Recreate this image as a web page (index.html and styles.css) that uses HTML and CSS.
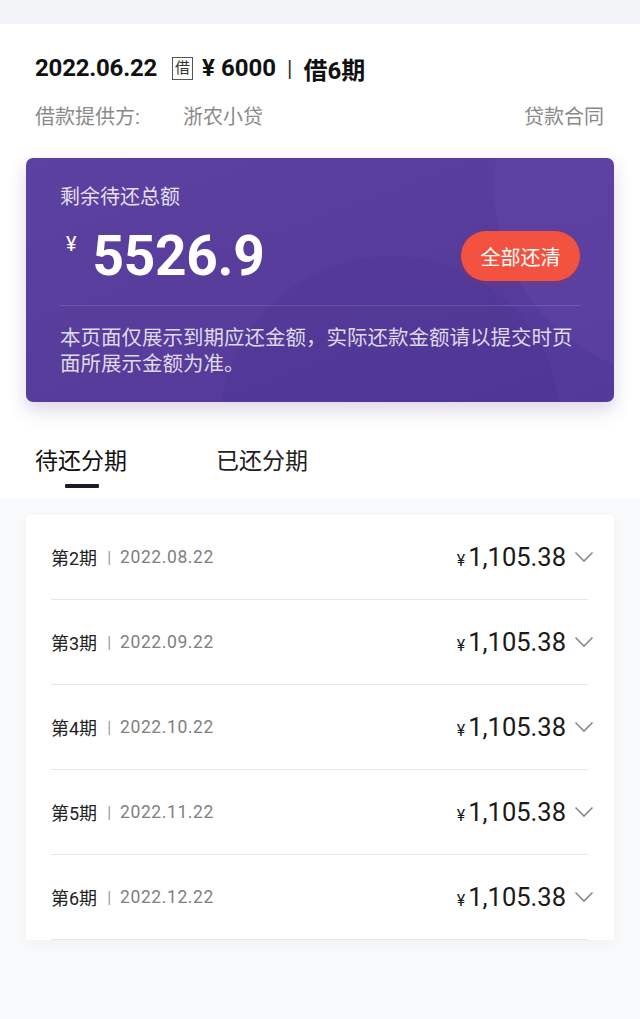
FILE: index.html
```html
<!DOCTYPE html>
<html lang="zh-CN">
<head>
<meta charset="utf-8">
<title>借款详情</title>
<link rel="stylesheet" href="styles.css">
</head>
<body>
<div class="topbar"></div>
<section class="head">
  <div class="title">
    <span class="date">2022.06.22</span>
    <span class="tag">借</span>
    <span class="amt">¥ 6000</span>
    <span class="sep">|</span>
    <span class="term">借6期</span>
  </div>
  <div class="provider">
    <span class="plabel">借款提供方:</span>
    <span class="pname">浙农小贷</span>
    <span class="contract">贷款合同</span>
  </div>
  <div class="card">
    <div class="clabel">剩余待还总额</div>
    <div class="crow">
      <div class="total"><span class="yen">¥</span><span class="num">5526.9</span></div>
      <button class="payall">全部还清</button>
    </div>
    <div class="cdiv"></div>
    <p class="note">本页面仅展示到期应还金额，实际还款金额请以提交时页面所展示金额为准。</p>
  </div>
  <div class="tabs">
    <div class="tab active">待还分期</div>
    <div class="tab">已还分期</div>
  </div>
</section>
<section class="listwrap">
  <div class="list">
    <div class="row"><span class="per">第2期</span><span class="bar">|</span><span class="d">2022.08.22</span><span class="money"><span class="y">¥</span>1,105.38</span><svg class="chev" viewBox="0 0 20 12"><path d="M1.5 1.5 L10 10 L18.5 1.5"/></svg></div>
    <div class="row"><span class="per">第3期</span><span class="bar">|</span><span class="d">2022.09.22</span><span class="money"><span class="y">¥</span>1,105.38</span><svg class="chev" viewBox="0 0 20 12"><path d="M1.5 1.5 L10 10 L18.5 1.5"/></svg></div>
    <div class="row"><span class="per">第4期</span><span class="bar">|</span><span class="d">2022.10.22</span><span class="money"><span class="y">¥</span>1,105.38</span><svg class="chev" viewBox="0 0 20 12"><path d="M1.5 1.5 L10 10 L18.5 1.5"/></svg></div>
    <div class="row"><span class="per">第5期</span><span class="bar">|</span><span class="d">2022.11.22</span><span class="money"><span class="y">¥</span>1,105.38</span><svg class="chev" viewBox="0 0 20 12"><path d="M1.5 1.5 L10 10 L18.5 1.5"/></svg></div>
    <div class="row"><span class="per">第6期</span><span class="bar">|</span><span class="d">2022.12.22</span><span class="money"><span class="y">¥</span>1,105.38</span><svg class="chev" viewBox="0 0 20 12"><path d="M1.5 1.5 L10 10 L18.5 1.5"/></svg></div>
  </div>
</section>
</body>
</html>
```
FILE: styles.css
```css
* { box-sizing: border-box; }
html, body { margin: 0; padding: 0; }
body {
  width: 640px;
  min-height: 1019px;
  background: #f8f9fb;
  font-family: Roboto, "Noto Sans CJK SC", sans-serif;
  color: #1a1a1a;
}
.topbar { height: 24px; background: #f2f3f6; }
.head { background: #ffffff; padding: 28px 26px 0; height: 475px; }
.title {
  display: flex; align-items: center;
  height: 32px; padding-left: 9px;
  font-weight: 700; font-size: 24px; color: #111;
}
.date { letter-spacing: -0.2px; }
.tag {
  margin-left: 15px;
  width: 21px; height: 23px;
  border: 1px solid #555;
  font-size: 15px; font-weight: 400; line-height: 21px;
  text-align: center; color: #333;
}
.amt { margin-left: 9px; }
.sep { margin: 0 11px; font-weight: 400; font-size: 22px; color: #333; }
.provider {
  display: flex; align-items: center;
  margin-top: 18px; height: 26px; padding: 0 10px 0 9px;
  font-size: 20px; color: #8a8a8a;
}
.plabel { width: 148px; }
.contract { margin-left: auto; color: #888; }
.card {
  margin-top: 30px;
  height: 244px;
  border-radius: 7px;
  padding: 27px 34px 0;
  color: #fff;
  background:
    radial-gradient(circle at 112% 12%, rgba(130,100,200,0.12) 0 190px, transparent 191px),
    radial-gradient(circle at 62% 110%, rgba(40,20,100,0.08) 0 170px, transparent 171px),
    linear-gradient(160deg, #5c41a1 0%, #573c9c 55%, #52399a 100%);
  box-shadow: 0 8px 18px rgba(95, 70, 160, 0.22);
}
.clabel { font-size: 20px; line-height: 24px; color: rgba(255,255,255,0.85); }
.crow {
  display: flex; align-items: center; justify-content: space-between;
  margin-top: 19px; height: 56px;
}
.total { display: flex; align-items: flex-start; padding-left: 6px; }
.yen { font-size: 20px; line-height: 20px; margin-top: 4px; margin-right: 16px; }
.num { font-size: 55px; font-weight: 700; line-height: 52px; letter-spacing: -0.3px; }
.payall {
  border: none; cursor: pointer;
  width: 119px; height: 50px; border-radius: 25px;
  background: #f2523f; color: #fff;
  font-family: "Noto Sans CJK SC", sans-serif; font-size: 20px;
  box-shadow: 0 2px 6px rgba(200, 50, 40, 0.25);
}
.cdiv { margin-top: 21px; height: 1px; background: rgba(255,255,255,0.14); }
.note {
  margin: 19px 0 0; font-size: 20.5px; line-height: 26px;
  color: rgba(255,255,255,0.82);
}
.tabs { display: flex; margin-top: 45px; padding-left: 9px; }
.tab { font-size: 23px; line-height: 30px; color: #222; position: relative; }
.tab + .tab { margin-left: 89px; }
.tab.active { color: #111; }
.tab.active::after {
  content: ""; position: absolute; left: 30px; top: 37px;
  width: 34px; height: 4px; background: #1c1c28; border-radius: 1px;
}
.listwrap { padding: 16px 26px 0; }
.list {
  background: #fff;
  border-radius: 4px;
  padding: 0 26px 0 25px;
  box-shadow: 0 4px 14px rgba(0,0,0,0.03);
}
.row {
  display: flex; align-items: center;
  height: 85px;
  border-bottom: 1px solid #e6e6e8;
}
.per { font-size: 18px; color: #222; }
.bar { margin: 0 9px 0 10px; font-size: 16px; color: #999; }
.d { font-size: 17.5px; letter-spacing: 0.6px; color: #808080; }
.money { margin-left: auto; font-size: 25.5px; color: #1a1a1a; display: flex; align-items: baseline; }
.y { font-size: 16px; margin-right: 3px; }
.chev { width: 20px; height: 12px; margin-left: 8px; margin-right: -6px; }
.chev path { fill: none; stroke: #8a8a8a; stroke-width: 1.6; }
```
